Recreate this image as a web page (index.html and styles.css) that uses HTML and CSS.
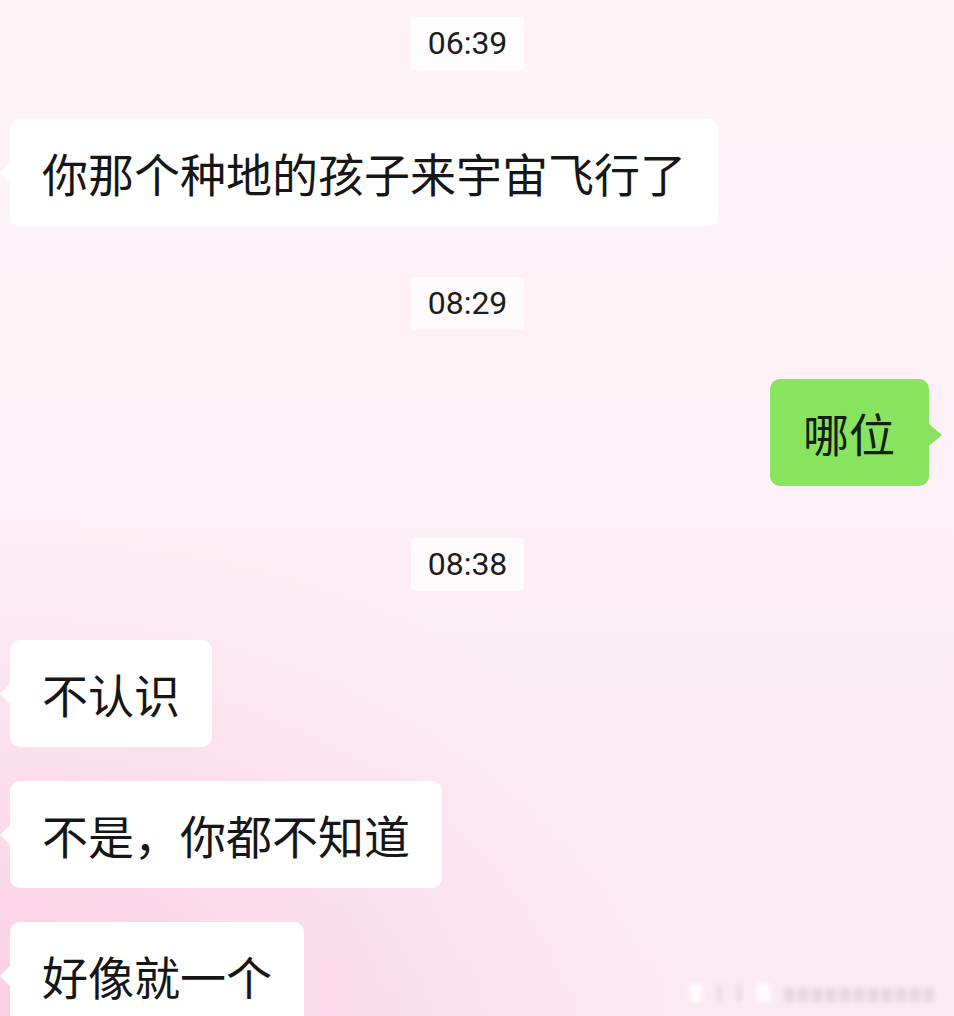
FILE: index.html
```html
<!DOCTYPE html>
<html lang="zh">
<head>
<meta charset="utf-8">
<title>Chat</title>
<link rel="stylesheet" href="styles.css">
</head>
<body>
<div class="chat">
  <div class="time-row"><span class="time">06:39</span></div>
  <div class="msg left"><div class="bubble white">你那个种地的孩子来宇宙飞行了</div></div>
  <div class="time-row"><span class="time">08:29</span></div>
  <div class="msg right"><div class="bubble green">哪位</div></div>
  <div class="time-row"><span class="time">08:38</span></div>
  <div class="group">
    <div class="msg left"><div class="bubble white">不认识</div></div>
    <div class="msg left"><div class="bubble white">不是，你都不知道</div></div>
    <div class="msg left"><div class="bubble white">好像就一个</div></div>
  </div>
</div>
<div class="watermark">
  <span class="wm a"></span><span class="wm b"></span><span class="wm c"></span><span class="wm d"></span><span class="wm e"></span>
</div>
</body>
</html>
```
FILE: styles.css
```css
html, body {
  margin: 0;
  padding: 0;
}
body {
  width: 954px;
  height: 1016px;
  overflow: hidden;
  position: relative;
  font-family: "Noto Sans CJK SC", "Noto Sans", sans-serif;
  background:
    radial-gradient(ellipse 700px 520px at 0px 1040px, rgba(250, 205, 226, 0.95), rgba(250, 205, 226, 0) 100%),
    linear-gradient(180deg, #fef4f8 0%, #fdf0f6 50%, #fceaf3 100%);
}
.chat {
  display: flex;
  flex-direction: column;
  padding-top: 17px;
}
.time-row {
  display: flex;
  justify-content: center;
  padding-right: 19px;
  margin-bottom: 49px;
}
.time {
  display: block;
  background: rgba(255, 253, 254, 0.85);
  color: #1c1c1c;
  font-family: Roboto, "Noto Sans", sans-serif;
  font-size: 32px;
  line-height: 41px;
  padding: 6px 17px;
  border-radius: 4px;
}
.msg {
  display: flex;
  margin-bottom: 51px;
}
.msg.left {
  padding-left: 10px;
  justify-content: flex-start;
}
.msg.right {
  padding-right: 26px;
  justify-content: flex-end;
  margin-bottom: 52px;
}
.group {
  display: flex;
  flex-direction: column;
  gap: 34px;
}
.group .msg {
  margin-bottom: 0;
}
.bubble {
  position: relative;
  font-size: 46px;
  line-height: 67px;
  padding: 20px 32px;
  border-radius: 10px;
  color: #161616;
  white-space: nowrap;
}
.bubble.white {
  background: #ffffff;
}
.bubble.green {
  background: #88e35e;
  color: #132010;
  padding: 20px 34px 20px 33px;
  margin-right: -1px;
}
.bubble.white::before {
  content: "";
  position: absolute;
  left: -10px;
  top: 44px;
  border-style: solid;
  border-width: 10px 10px 10px 0;
  border-color: transparent #ffffff transparent transparent;
}
.bubble.green::after {
  content: "";
  position: absolute;
  right: -13px;
  top: 45px;
  border-style: solid;
  border-width: 11px 0 11px 13px;
  border-color: transparent transparent transparent #88e35e;
}
.watermark {
  position: absolute;
  left: 690px;
  top: 984px;
  display: flex;
  gap: 14px;
  align-items: flex-end;
  filter: blur(2px);
  opacity: 0.9;
}
.wm {
  display: block;
  height: 18px;
  border-radius: 2px;
}
.wm.a { width: 12px; background: #ffffff; }
.wm.b { width: 6px; background: #e9dde3; }
.wm.c { width: 6px; background: #e9dde3; }
.wm.d { width: 14px; background: #ffffff; }
.wm.e { width: 150px; height: 14px; background: repeating-linear-gradient(90deg, #e4d5dd 0 10px, #f2e6ec 10px 14px); }
```
